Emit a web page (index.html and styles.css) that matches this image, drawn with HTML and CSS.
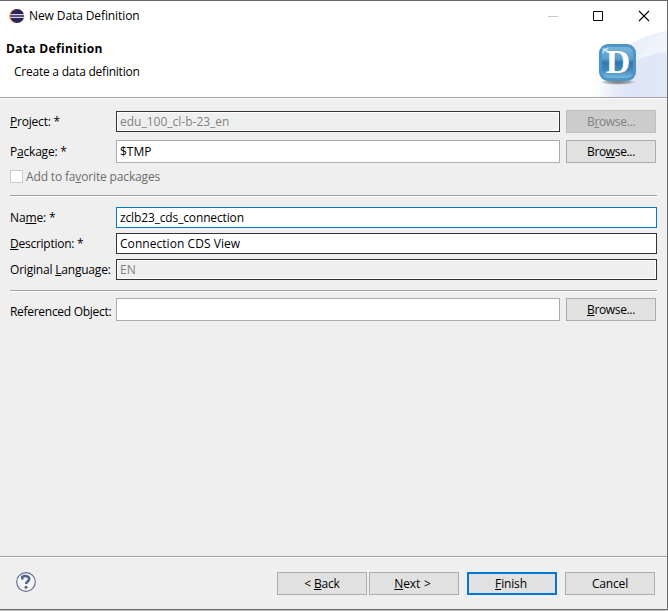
FILE: index.html
```html
<!DOCTYPE html>
<html lang="en">
<head>
<meta charset="utf-8">
<title>New Data Definition</title>
<link rel="stylesheet" href="styles.css">
</head>
<body>
<main class="dialog">
  <header class="banner">
    <svg class="banner-art" width="78" height="68" viewBox="0 0 78 68" aria-hidden="true">
      <defs>
        <linearGradient id="swoosh" x1="0" y1="0" x2="1" y2="0"><stop offset="0" stop-color="#fff"/><stop offset=".4" stop-color="#e4eaf8"/><stop offset="1" stop-color="#e4eaf8"/></linearGradient>
        <linearGradient id="fold" x1="0" y1="0" x2="1" y2="0"><stop offset="0" stop-color="#d9e1f5" stop-opacity="0"/><stop offset=".5" stop-color="#d9e1f5"/><stop offset="1" stop-color="#dfe6f7"/></linearGradient>
        <linearGradient id="tile" x1="0" y1="0" x2="0" y2="1"><stop offset="0" stop-color="#79b5da"/><stop offset=".38" stop-color="#5b9fcb"/><stop offset=".5" stop-color="#2f78ae"/><stop offset=".75" stop-color="#4389bb"/><stop offset="1" stop-color="#78b7de"/></linearGradient>
        <radialGradient id="shade"><stop offset="0" stop-color="#666" stop-opacity=".9"/><stop offset=".6" stop-color="#777" stop-opacity=".6"/><stop offset="1" stop-color="#888" stop-opacity="0"/></radialGradient>
      </defs>
      <path d="M4 68C9 34 40 7 78 2V68Z" fill="url(#swoosh)" opacity=".75"/>
      <path d="M39 68C41 31 59 9 78 2V24C56 29 44 44 39 68Z" fill="#f4f7fd" opacity=".5"/>
      <path d="M8 68C20 44 48 26 78 23V68Z" fill="url(#fold)" opacity=".75"/>
      <ellipse cx="29" cy="53" rx="18" ry="3" fill="url(#shade)"/>
      <rect x="10" y="15" width="37" height="37" rx="9" fill="#4c95c8"/>
      <rect x="13" y="18" width="31" height="31" rx="6" fill="url(#tile)"/>
      <path d="m14 18 2 2 4-2-2 3 1 2-3-1-3 3 1-4-1-2 2 1z" fill="#e4f3fb" opacity=".8"/>
    </svg>
    <span class="banner-letter">D</span>
    <div class="titlebar">
      <svg width="16" height="16" viewBox="0 0 16 16" aria-hidden="true"><circle cx="7" cy="8" r="6.8" fill="#f49b35"/><circle cx="8.2" cy="8" r="6.9" fill="#2d2557"/><path d="M1.5 6h13.8v1.2H1.5zM1.5 8.7h13.8v1.2H1.5z" fill="#d5d3e2"/></svg>
      <span class="window-title">New Data Definition</span>
      <svg class="controls" width="104" height="14" viewBox="0 0 104 14" aria-hidden="true"><path d="M0 7.5h10" stroke="#c8c8c8"/><path d="M45.5 2.5h9v9h-9z" fill="none" stroke="#000"/><path d="m91 2 10 10m0-10L91 12" fill="none" stroke="#000" stroke-width="1.1"/></svg>
    </div>
    <h1>Data Definition</h1>
    <p>Create a data definition</p>
  </header>

  <form class="content">
    <section class="group source">
      <div class="row"><span class="label project"><u>P</u>roject: *</span><span class="field dark readonly project-value">edu_100_cl-b-23_en</span><span class="button disabled">B<u>r</u>owse...</span></div>
      <div class="row package-row"><span class="label package">P<u>a</u>ckage: *</span><span class="field tall">$TMP</span><span class="button">Bro<u>w</u>se...</span></div>
      <div class="favorite"><i class="checkbox"></i><span>Add to fa<u>v</u>orite packages</span></div>
    </section>
    <section class="group details">
      <div class="row"><span class="label name">Na<u>m</u>e: *</span><span class="field focused name-value">zclb23_cds_connection</span></div>
      <div class="row"><span class="label description"><u>D</u>escription: *</span><span class="field dark description-value">Connection CDS View</span></div>
      <div class="row"><span class="label language">Original <u>L</u>anguage:</span><span class="field dark readonly language-value">EN</span></div>
    </section>
    <section class="reference">
      <div class="row"><span class="label referenced">Referenced Object:</span><span class="field tall"></span><span class="button"><u>B</u>rowse...</span></div>
    </section>
  </form>

  <footer>
    <svg class="help" width="20" height="20" viewBox="0 0 20 20" aria-hidden="true"><circle cx="10" cy="10" r="9.3" fill="#f4f4f6" stroke="#62708f" stroke-width="1.2"/><path d="M6.3 7.6V4.8C8.7 3.4 13.2 3.8 13.2 6.9c0 2.6-3.1 2.6-3.1 5.2" fill="none" stroke="#4d618a" stroke-width="2.5"/><circle cx="10" cy="15.2" r="1.5" fill="#4d618a"/></svg>
    <span class="button back">&lt; <u>B</u>ack</span><span class="button next"><u>N</u>ext &gt;</span><span class="button default"><u>F</u>inish</span><span class="button">Cancel</span>
  </footer>
</main>
</body>
</html>
```
FILE: styles.css
```css
* { box-sizing: border-box; }
body { margin: 0; background: #c4c4c4; }
.dialog {
  width: 668px; height: 610px; display: flex; flex-direction: column;
  border: solid #696969; border-width: 1px 1px 1px 0; background: #efefef;
  color: #000; font: 12px/16px "Open Sans", "Noto Sans", sans-serif;
  white-space: nowrap;
}
u { text-decoration-thickness: 1px; text-underline-offset: 1px; text-decoration-skip-ink: none; }
.banner { position: relative; height: 98px; flex: none; background: #fff; border-bottom: 1px solid #fff; box-shadow: inset 0 -1px #a0a0a0; }
.banner-art { position: absolute; right: 0; bottom: 1px; }
.banner-letter { position: absolute; left: 604px; top: 42px; width: 28px; text-align: center; color: #fff; font: bold 34px/38px "Liberation Serif", serif; }
.titlebar { display: flex; align-items: center; height: 29px; padding: 0 15px 0 9px; }
.window-title { margin-left: 4px; letter-spacing: -.1px; }
.controls { margin-left: auto; }
h1 { margin: 10px 0 0 6px; font: bold 12px/17px "Open Sans", sans-serif; letter-spacing: .33px; }
p { margin: 7px 0 0 14px; letter-spacing: -.24px; }
.content { flex: 1; padding: 11px 10px 0; }
.row { display: flex; align-items: center; height: 23px; }
.label { width: 106px; flex: none; letter-spacing: -.2px; }
.name { letter-spacing: -.15px; }
.description { letter-spacing: -.25px; }
.referenced { letter-spacing: -.29px; }
.field { flex: 1; height: 21px; border: 1px solid #ababb2; background: #fff; padding: 2px 3px 0; }
.name-value { letter-spacing: -.14px; }
.description-value { letter-spacing: .05px; }
.tall { height: 23px; padding-top: 3px; }
.dark { border-color: #333337; }
.focused { border-color: #0078d7; }
.readonly { color: #838383; background: #efefef; box-shadow: inset 0 0 0 1px #fff; }
.button { width: 90px; height: 23px; flex: none; margin: 0 1px 0 6px; border: 1px solid #adadad; background: #e1e1e1; text-align: center; line-height: 22px; letter-spacing: -.35px; }
.disabled { color: #838383; background: #ccc; border-color: #bfbfbf; }
.group { border-bottom: 1px solid #a0a0a0; box-shadow: 0 1px #fff; }
.source { height: 86px; }
.package-row { margin-top: 7px; }
.favorite { display: flex; align-items: center; height: 16px; margin-top: 5px; color: #6d6d6d; letter-spacing: -.15px; }
.favorite span { padding-top: 2px; }
.checkbox { width: 13px; height: 13px; border: 1px solid #ccc; background: #fff; margin-right: 3px; }
.details { height: 95px; padding-top: 11px; }
.details .row { height: 21px; margin-bottom: 5px; }
.reference { padding-top: 7px; }
.reference .label { padding-top: 5px; }
footer { height: 53px; flex: none; display: flex; align-items: flex-start; padding: 15px 12px 0 16px; border-top: 1px solid #a0a0a0; box-shadow: inset 0 1px #fff; }
footer .button { margin: 0 0 0 8px; letter-spacing: -.15px; }
footer .back { margin-left: auto; }
footer .next { margin-left: 2px; padding-right: 3px; word-spacing: 1px; }
footer .default { border: 2px solid #0078d7; line-height: 20px; padding-right: 2px; }
```
